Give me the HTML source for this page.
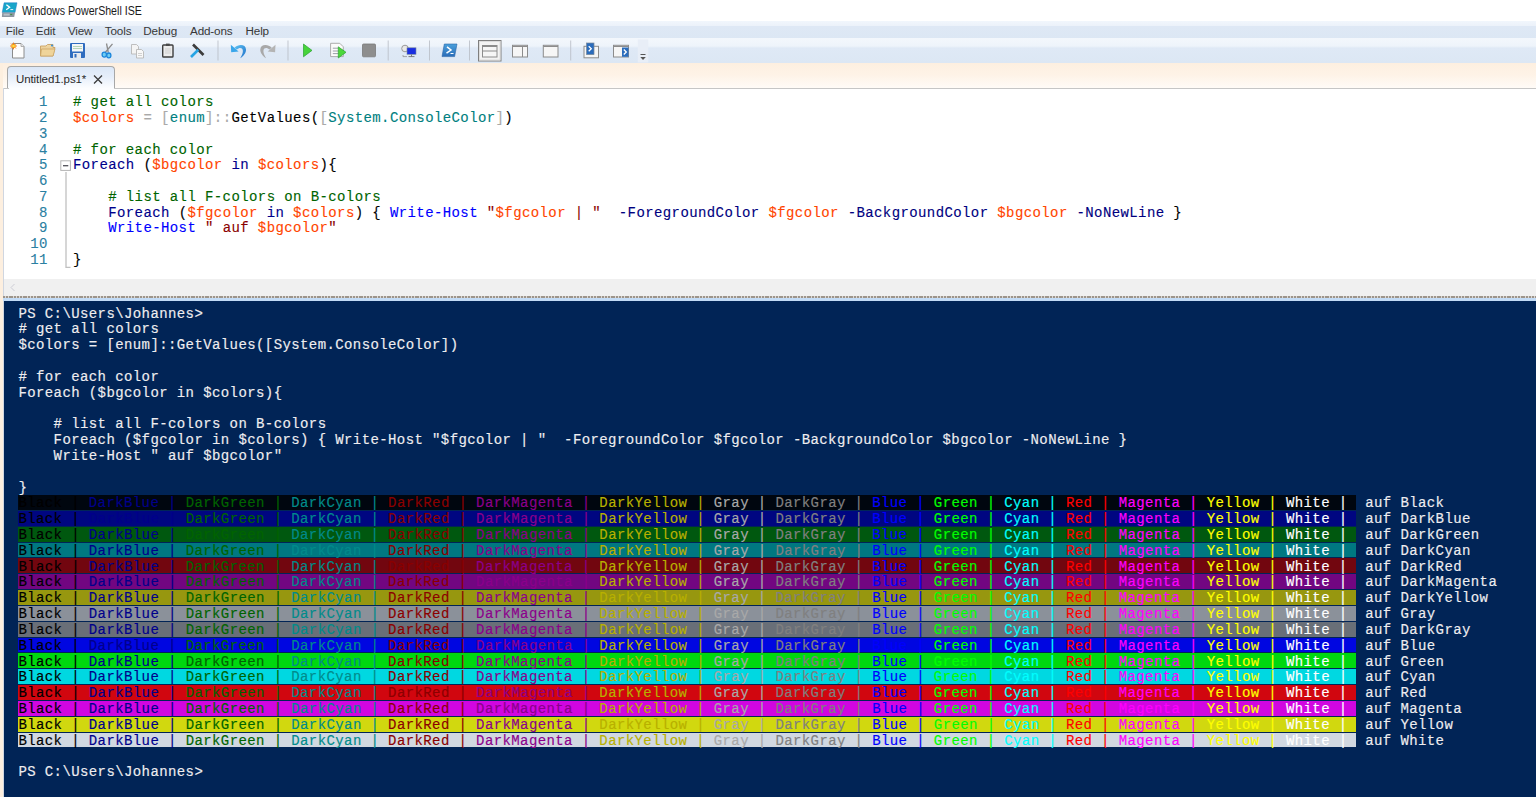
<!DOCTYPE html><html><head><meta charset="utf-8"><style>
*{margin:0;padding:0;box-sizing:border-box}
html,body{width:1536px;height:797px;overflow:hidden;background:#fff;position:relative;font-family:"Liberation Sans",sans-serif}
.a{position:absolute}
.ui{font-size:11.5px;color:#1e1e1e;white-space:pre}
.mono{font-family:"Liberation Mono",monospace;font-size:14px;letter-spacing:0.4px;white-space:pre}
.ln{line-height:15.77px;-webkit-text-stroke:0.12px currentColor}
.cl{font-size:14px!important;letter-spacing:0.4px!important;line-height:15.82px;color:#eeedf0;-webkit-text-stroke:0.15px currentColor}
</style></head><body>

<div class="a" style="left:0;top:0;width:1536px;height:21px;background:#fff"></div>
<svg class="a" style="left:0;top:0" width="20" height="20" viewBox="0 0 20 20">
<path d="M4.1 2.8 L17 2.8 L15 12.6 L2.2 12.6 Z" fill="#19a6c9" stroke="#1f78c8" stroke-width="0.5"/>
<path d="M2.2 12.6 L15 12.6 L14.2 16.9 L1.9 16.9 Z" fill="#8d97a2"/>
<rect x="3.6" y="13.6" width="6" height="2" fill="#b8c0c8"/>
<rect x="10.2" y="13.9" width="2" height="1.2" fill="#4c8a4c"/>
<path d="M6.4 4.8 L9.6 7.3 L6.2 9.7" stroke="#fff" stroke-width="1.3" fill="none"/>
<path d="M10.4 9.6 L13.2 9.6" stroke="#fff" stroke-width="0.9"/>
</svg>
<div class="a ui" style="left:21.5px;top:3.6px;font-size:12px;letter-spacing:0;transform:scaleX(0.885);transform-origin:0 0;color:#1a1a1a">Windows PowerShell ISE</div>
<div class="a" style="left:0;top:21px;width:1536px;height:17px;background:linear-gradient(#f1f6fc 0,#ecf2fa 4.5px,#dee8f5 5.5px,#dce7f4 17px)"></div>
<div class="a ui" style="left:5.8px;top:23.6px;font-size:11.7px;letter-spacing:-0.15px;color:#383838">File</div>
<div class="a ui" style="left:35.8px;top:23.6px;font-size:11.7px;letter-spacing:-0.15px;color:#383838">Edit</div>
<div class="a ui" style="left:67.9px;top:23.6px;font-size:11.7px;letter-spacing:-0.15px;color:#383838">View</div>
<div class="a ui" style="left:104.8px;top:23.6px;font-size:11.7px;letter-spacing:-0.15px;color:#383838">Tools</div>
<div class="a ui" style="left:143.3px;top:23.6px;font-size:11.7px;letter-spacing:-0.15px;color:#383838">Debug</div>
<div class="a ui" style="left:190px;top:23.6px;font-size:11.7px;letter-spacing:-0.15px;color:#383838">Add-ons</div>
<div class="a ui" style="left:245.5px;top:23.6px;font-size:11.7px;letter-spacing:-0.15px;color:#383838">Help</div>
<div class="a" style="left:0;top:38px;width:1536px;height:25px;background:linear-gradient(#f3f7fc 0,#eef4fb 8px,#dfe9f6 10px,#dce7f4 25px)"></div>
<svg class="a" style="left:0;top:38px" width="660" height="26" viewBox="0 0 660 26">
<defs>
<linearGradient id="gfold" x1="0" y1="0" x2="0" y2="1"><stop offset="0" stop-color="#f0d9a8"/><stop offset="1" stop-color="#e2bf80"/></linearGradient>
<linearGradient id="gps" x1="0" y1="0" x2="0" y2="1"><stop offset="0" stop-color="#4aa0dc"/><stop offset="1" stop-color="#2a6cb8"/></linearGradient>
</defs>
<!-- new -->
<path d="M12.5 5.5 H21 L24 8.5 V20 H12.5 Z" fill="#fdfdfd" stroke="#8c8c8c" stroke-width="1"/>
<path d="M21 5.5 V8.5 H24" fill="#e8e8e8" stroke="#a0a0a0" stroke-width="0.8"/>
<circle cx="13.5" cy="8" r="2.2" fill="#ffd21e"/>
<path d="M13.5 4.6 V11.4 M10.1 8 H16.9 M11.1 5.6 L15.9 10.4 M15.9 5.6 L11.1 10.4" stroke="#f57a1a" stroke-width="1"/>
<circle cx="13.5" cy="8" r="1.3" fill="#ffe040"/>
<!-- open -->
<path d="M40.5 8 H46 L47.5 6.5 H53 V9.5 H55 L53 18 H40.5 Z" fill="url(#gfold)" stroke="#c9a262" stroke-width="0.9"/>
<path d="M41.5 11 H55 L53 18 H40.5 Z" fill="#efd49a" stroke="#c9a262" stroke-width="0.7"/>
<circle cx="52" cy="7.5" r="1" fill="#2a8ee0"/>
<!-- save -->
<rect x="70" y="5" width="15" height="15" rx="1" fill="#2f6cbf"/>
<rect x="72" y="6" width="11" height="7.5" fill="#f4f6f8"/>
<path d="M73 8.5 H82 M73 10.5 H82" stroke="#9cc89c" stroke-width="0.7"/>
<rect x="73" y="15" width="8" height="5" fill="#e6e9ee"/>
<rect x="74.5" y="16" width="2" height="3.5" fill="#2f6cbf"/>
<!-- cut -->
<path d="M106.5 43.5 L108.3 52.5 M112.5 43.8 L105.2 52.5" transform="translate(0,-38)" stroke="#8c8c8c" stroke-width="1.3"/>
<ellipse cx="104.3" cy="16.6" rx="2.2" ry="2.5" fill="#6fcdf2" stroke="#1c86dc" stroke-width="1.3"/>
<ellipse cx="108.8" cy="17.4" rx="2.1" ry="2.4" fill="#6fcdf2" stroke="#1c86dc" stroke-width="1.3"/>
<!-- copy -->
<path d="M131.5 6.5 H136.5 L138.5 8.5 V16 H131.5 Z" fill="#f4f4f4" stroke="#b8b8b8" stroke-width="0.9"/>
<path d="M136.5 11.5 H141.5 L143.5 13.5 V20 H136.5 Z" fill="#f8f8f8" stroke="#b8b8b8" stroke-width="0.9"/>
<path d="M138 15.5 H142 M138 17.5 H142" stroke="#c0c0c0" stroke-width="0.7"/>
<!-- paste -->
<rect x="162.7" y="7" width="10.3" height="12" rx="0.8" fill="#ececec" stroke="#3e3e3e" stroke-width="1.4"/>
<rect x="166" y="5.6" width="3.7" height="2.4" fill="#4a4a4a"/>
<path d="M165 11 H171 M165 13 H171 M165 15 H171" stroke="#c4c4c4" stroke-width="0.7"/>
<!-- clear -->
<path d="M193 6.5 L203.5 17" stroke="#3c3c3c" stroke-width="2.6"/>
<path d="M198.3 11.8 L191 19" stroke="#26a4e4" stroke-width="2.6"/>
<!-- sep -->
<path d="M218 2.5 V22.5 M288 2.5 V22.5 M388.2 2.5 V22.5 M429.5 2.5 V22.5 M469.5 2.5 V22.5 M570.7 2.5 V22.5" stroke="#b9bec6" stroke-width="0.85"/>
<!-- undo -->
<defs><linearGradient id="gun" x1="0" y1="0" x2="1" y2="1"><stop offset="0" stop-color="#5ec4f4"/><stop offset="1" stop-color="#1f6fc8"/></linearGradient></defs>
<path d="M234.5 9.8 C238.5 5.6 245.8 6 246 11.5 C246.2 15 243.5 18 240.2 20.3 C242 17 243.2 14.6 242.8 12.2 C242.3 9.3 239 9.4 236.8 11.6 Z" fill="url(#gun)"/>
<path d="M230.8 6.8 L231.2 14.2 L238.6 13.6 Z" fill="#3aa6ea"/>
<!-- redo -->
<path d="M271.8 9.8 C267.8 5.6 260.5 6 260.3 11.5 C260.1 15 262.8 18 266.1 20.3 C264.3 17 263.1 14.6 263.5 12.2 C264 9.3 267.3 9.4 269.5 11.6 Z" fill="#a9a9a9"/>
<path d="M275.5 6.8 L275.1 14.2 L267.7 13.6 Z" fill="#b4b4b4"/>
<!-- run -->
<path d="M303.5 6 L312 12.4 L303.5 18.8 Z" fill="#46d43a" stroke="#2aa030" stroke-width="0.7"/>
<!-- run selection -->
<path d="M330.6 5.3 H339.8 L343.3 8.8 V18.6 H330.6 Z" fill="#fbfbfb" stroke="#a4a4a4" stroke-width="0.9"/>
<path d="M332.8 10.2 H338.5 M332.8 13 H338.5 M332.8 15.6 H338.5" stroke="#9aa0a8" stroke-width="1"/>
<path d="M338.3 8.8 L346 14.3 L338.3 20 Z" fill="#4cd83a" stroke="#2aa030" stroke-width="0.7"/>
<!-- stop -->
<rect x="362.5" y="6" width="13" height="12.8" rx="1" fill="#8e8e8e" stroke="#7a7a7a" stroke-width="0.8"/>
<!-- remote -->
<circle cx="405" cy="10.5" r="3.3" fill="#e8e8e8" stroke="#9a9a9a" stroke-width="1"/>
<rect x="407" y="9.8" width="9" height="6.5" fill="#1a2ee0" stroke="#7a8a9a" stroke-width="0.6"/>
<path d="M411.5 16.5 V18.5 M408.5 18.6 H414.5" stroke="#707070" stroke-width="0.9"/>
<path d="M403 17 V18.6 H407" stroke="#909090" stroke-width="0.8" fill="none"/>
<!-- ps -->
<path d="M444.3 6 H457 L454.6 18.6 H442 Z" fill="url(#gps)" stroke="#2a64a8" stroke-width="0.6"/>
<path d="M447 8.8 L451 12 L446.5 15.2" fill="none" stroke="#fff" stroke-width="1.5"/>
<path d="M450.5 15.5 H453.5" stroke="#fff" stroke-width="1"/>
<!-- layout1 selected -->
<rect x="478.5" y="2.5" width="22.5" height="20.5" fill="#f3f3f3" stroke="#7e7e7e" stroke-width="1"/>
<rect x="479.5" y="3.5" width="20.5" height="18.5" fill="none" stroke="#d8d8d8" stroke-width="0.8"/>
<rect x="482.5" y="7.5" width="14.5" height="11.5" fill="#f6f6f6" stroke="#8c8c8c" stroke-width="1"/>
<path d="M482.5 8.5 H497 M482.5 13 H497" stroke="#8c8c8c" stroke-width="1"/>
<!-- layout2 -->
<rect x="512.5" y="7.3" width="15" height="11.7" fill="#f6f6f6" stroke="#8c8c8c" stroke-width="1"/>
<path d="M512.5 8.5 H527.5 M522.5 8.5 V19" stroke="#8c8c8c" stroke-width="1"/>
<!-- layout3 -->
<rect x="543.3" y="7.3" width="14.7" height="11.7" fill="#f6f6f6" stroke="#8c8c8c" stroke-width="1"/>
<path d="M543.3 8.5 H558" stroke="#8c8c8c" stroke-width="1"/>
<!-- show script pane top -->
<rect x="584" y="8.3" width="14.5" height="11.5" fill="#f6f6f6" stroke="#8c8c8c" stroke-width="1"/>
<rect x="586.5" y="5" width="7.5" height="11.6" fill="#2a6cbc" stroke="#7a8898" stroke-width="0.7"/>
<path d="M588.7 8.3 L591.3 10.8 L588.7 13.3" fill="none" stroke="#fff" stroke-width="1.3"/>
<!-- show script pane right -->
<rect x="613.5" y="7.3" width="15" height="11.7" fill="#f6f6f6" stroke="#8c8c8c" stroke-width="1"/>
<path d="M613.5 8.5 H628.5" stroke="#8c8c8c" stroke-width="1"/>
<rect x="622" y="9.5" width="6.5" height="9.3" fill="#2a6cbc"/>
<path d="M623.8 11.5 L626.3 14 L623.8 16.5" fill="none" stroke="#fff" stroke-width="1.3"/>
<!-- overflow -->
<rect x="637.8" y="1.5" width="10.5" height="23" fill="#e8eef7"/>
<path d="M640.5 16.5 H645.5" stroke="#555" stroke-width="1"/>
<path d="M640.3 19 H645.8 L643 22 Z" fill="#555"/>
</svg>

<div class="a" style="left:0;top:63.4px;width:1536px;height:24.6px;background:linear-gradient(#fdefe0 0,#fef3e7 12px,#fffbf7 25px)"></div>
<div class="a" style="left:7px;top:66.3px;width:107.5px;height:22.7px;border:1px solid #a7a7a7;border-bottom:none;border-radius:4px 4px 0 0;background:linear-gradient(#dbe7f7,#e6eefa 10px,#fdfeff 22px)"></div>
<div class="a ui" style="left:16px;top:72.5px;letter-spacing:-0.1px;color:#2a2a2a">Untitled1.ps1*</div>
<svg class="a" style="left:93px;top:75px" width="10" height="9" viewBox="0 0 10 9"><path d="M1 0.5 L9 8.5 M9 0.5 L1 8.5" stroke="#3a3a3a" stroke-width="1.25"/></svg>
<div class="a" style="left:0;top:63px;width:3.2px;height:734px;background:#fdefdf"></div>
<div class="a" style="left:3px;top:88px;width:1533px;height:191px;background:#fff;border-top:1px solid #c6c6c6;border-left:1px solid #d4d8e0"></div>
<div class="a" style="left:8.5px;top:88px;width:105px;height:1.5px;background:#fcfdff"></div>
<div class="a mono ln" style="left:39.0px;top:95.2px;color:#2a80a2">1</div>
<div class="a mono ln" style="left:39.0px;top:110.97px;color:#2a80a2">2</div>
<div class="a mono ln" style="left:39.0px;top:126.74000000000001px;color:#2a80a2">3</div>
<div class="a mono ln" style="left:39.0px;top:142.51px;color:#2a80a2">4</div>
<div class="a mono ln" style="left:39.0px;top:158.28px;color:#2a80a2">5</div>
<div class="a mono ln" style="left:39.0px;top:174.05px;color:#2a80a2">6</div>
<div class="a mono ln" style="left:39.0px;top:189.82px;color:#2a80a2">7</div>
<div class="a mono ln" style="left:39.0px;top:205.59px;color:#2a80a2">8</div>
<div class="a mono ln" style="left:39.0px;top:221.36px;color:#2a80a2">9</div>
<div class="a mono ln" style="left:30.199999999999996px;top:237.13px;color:#2a80a2">10</div>
<div class="a mono ln" style="left:30.199999999999996px;top:252.89999999999998px;color:#2a80a2">11</div>
<div class="a mono ln" style="left:73px;top:95.2px"><span style="color:#006400"># get all colors</span></div>
<div class="a mono ln" style="left:73px;top:110.97px"><span style="color:#ff4500">$colors</span><span style="color:#a9a9a9"> = </span><span style="color:#a9a9a9">[</span><span style="color:#008080">enum</span><span style="color:#a9a9a9">]::</span><span style="color:#000000">GetValues</span><span style="color:#000000">(</span><span style="color:#a9a9a9">[</span><span style="color:#008080">System.ConsoleColor</span><span style="color:#a9a9a9">]</span><span style="color:#000000">)</span></div>
<div class="a mono ln" style="left:73px;top:142.51px"><span style="color:#006400"># for each color</span></div>
<div class="a mono ln" style="left:73px;top:158.28px"><span style="color:#00008b">Foreach</span><span style="color:#000000"> (</span><span style="color:#ff4500">$bgcolor</span><span style="color:#00008b"> in </span><span style="color:#ff4500">$colors</span><span style="color:#000000">){</span></div>
<div class="a mono ln" style="left:73px;top:189.82px"><span style="color:#006400">    # list all F-colors on B-colors</span></div>
<div class="a mono ln" style="left:73px;top:205.59px"><span style="color:#00008b">    Foreach</span><span style="color:#000000"> (</span><span style="color:#ff4500">$fgcolor</span><span style="color:#00008b"> in </span><span style="color:#ff4500">$colors</span><span style="color:#000000">) { </span><span style="color:#0000ff">Write-Host</span><span style="color:#8b0000"> &quot;</span><span style="color:#ff4500">$fgcolor</span><span style="color:#8b0000"> | &quot;</span><span style="color:#000080">  -ForegroundColor </span><span style="color:#ff4500">$fgcolor</span><span style="color:#000080"> -BackgroundColor </span><span style="color:#ff4500">$bgcolor</span><span style="color:#000080"> -NoNewLine </span><span style="color:#000000">}</span></div>
<div class="a mono ln" style="left:73px;top:221.36px"><span style="color:#0000ff">    Write-Host</span><span style="color:#8b0000"> &quot; auf </span><span style="color:#ff4500">$bgcolor</span><span style="color:#8b0000">&quot;</span></div>
<div class="a mono ln" style="left:73px;top:252.89999999999998px"><span style="color:#000000">}</span></div>
<svg class="a" style="left:58px;top:156px" width="16" height="116"><rect x="2.8" y="4.8" width="9.6" height="9.6" fill="#fff" stroke="#b4b4b4" stroke-width="1"/><path d="M5 9.7 H10.3" stroke="#505058" stroke-width="1.3"/><path d="M8 16 V111.3 H12.5" stroke="#c0c0c0" stroke-width="1.3" fill="none"/></svg>
<div class="a" style="left:4px;top:279px;width:1532px;height:17px;background:#f0f0f0"></div>
<div class="a" style="left:3px;top:88px;width:1px;height:709px;background:#d0d6e0"></div>
<svg class="a" style="left:8.5px;top:282.5px" width="8" height="9"><path d="M5.5 1 L2 4.5 L5.5 8" stroke="#cdcdd5" stroke-width="1" fill="none"/></svg>
<div class="a" style="left:3px;top:296.2px;width:1533px;height:1.7px;background:repeating-linear-gradient(90deg,#9c948a 0,#9c948a 2px,#dcd8d4 2px,#dcd8d4 2.8px)"></div>
<div class="a" style="left:3px;top:297.9px;width:1533px;height:2.7px;background:#c2dbf6"></div>
<div class="a" style="left:4px;top:300.6px;width:1532px;height:497px;background:#012456"></div>
<div class="a mono cl" style="left:18.400000000000002px;top:306.5px">PS C:\Users\Johannes&gt;</div>
<div class="a mono cl" style="left:18.400000000000002px;top:322.32px"># get all colors</div>
<div class="a mono cl" style="left:18.400000000000002px;top:338.14px">$colors = [enum]::GetValues([System.ConsoleColor])</div>
<div class="a mono cl" style="left:18.400000000000002px;top:369.78px"># for each color</div>
<div class="a mono cl" style="left:18.400000000000002px;top:385.6px">Foreach ($bgcolor in $colors){</div>
<div class="a mono cl" style="left:18.400000000000002px;top:417.24px">    # list all F-colors on B-colors</div>
<div class="a mono cl" style="left:18.400000000000002px;top:433.06px">    Foreach ($fgcolor in $colors) { Write-Host &quot;$fgcolor | &quot;  -ForegroundColor $fgcolor -BackgroundColor $bgcolor -NoNewLine }</div>
<div class="a mono cl" style="left:18.400000000000002px;top:448.88px">    Write-Host &quot; auf $bgcolor&quot;</div>
<div class="a mono cl" style="left:18.400000000000002px;top:480.52px">}</div>
<div class="a" style="left:18.3px;top:495.10px;width:1337.6000000000001px;height:14.9px;background:#00060f"></div>
<div class="a mono cl" style="left:18.400000000000002px;top:496.34px"><span style="color:#000000">Black | </span><span style="color:#00008b">DarkBlue | </span><span style="color:#006400">DarkGreen | </span><span style="color:#008b8b">DarkCyan | </span><span style="color:#8b0000">DarkRed | </span><span style="color:#8b008b">DarkMagenta | </span><span style="color:#b8b000">DarkYellow | </span><span style="color:#a9a9a9">Gray | </span><span style="color:#808080">DarkGray | </span><span style="color:#0000ff">Blue | </span><span style="color:#00ff00">Green | </span><span style="color:#00ffff">Cyan | </span><span style="color:#ff0000">Red | </span><span style="color:#ff00ff">Magenta | </span><span style="color:#ffff00">Yellow | </span><span style="color:#ffffff">White | </span> <span style="color:#eeedf0">auf Black</span></div>
<div class="a" style="left:18.3px;top:510.93px;width:1337.6000000000001px;height:14.9px;background:#000681"></div>
<div class="a mono cl" style="left:18.400000000000002px;top:512.16px"><span style="color:#000000">Black | </span><span style="color:#00008b">DarkBlue | </span><span style="color:#006400">DarkGreen | </span><span style="color:#008b8b">DarkCyan | </span><span style="color:#8b0000">DarkRed | </span><span style="color:#8b008b">DarkMagenta | </span><span style="color:#b8b000">DarkYellow | </span><span style="color:#a9a9a9">Gray | </span><span style="color:#808080">DarkGray | </span><span style="color:#0000ff">Blue | </span><span style="color:#00ff00">Green | </span><span style="color:#00ffff">Cyan | </span><span style="color:#ff0000">Red | </span><span style="color:#ff00ff">Magenta | </span><span style="color:#ffff00">Yellow | </span><span style="color:#ffffff">White | </span> <span style="color:#eeedf0">auf DarkBlue</span></div>
<div class="a" style="left:18.3px;top:526.76px;width:1337.6000000000001px;height:14.9px;background:#00580f"></div>
<div class="a mono cl" style="left:18.400000000000002px;top:527.98px"><span style="color:#000000">Black | </span><span style="color:#00008b">DarkBlue | </span><span style="color:#006400">DarkGreen | </span><span style="color:#008b8b">DarkCyan | </span><span style="color:#8b0000">DarkRed | </span><span style="color:#8b008b">DarkMagenta | </span><span style="color:#b8b000">DarkYellow | </span><span style="color:#a9a9a9">Gray | </span><span style="color:#808080">DarkGray | </span><span style="color:#0000ff">Blue | </span><span style="color:#00ff00">Green | </span><span style="color:#00ffff">Cyan | </span><span style="color:#ff0000">Red | </span><span style="color:#ff00ff">Magenta | </span><span style="color:#ffff00">Yellow | </span><span style="color:#ffffff">White | </span> <span style="color:#eeedf0">auf DarkGreen</span></div>
<div class="a" style="left:18.3px;top:542.59px;width:1337.6000000000001px;height:14.9px;background:#007881"></div>
<div class="a mono cl" style="left:18.400000000000002px;top:543.80px"><span style="color:#000000">Black | </span><span style="color:#00008b">DarkBlue | </span><span style="color:#006400">DarkGreen | </span><span style="color:#008b8b">DarkCyan | </span><span style="color:#8b0000">DarkRed | </span><span style="color:#8b008b">DarkMagenta | </span><span style="color:#b8b000">DarkYellow | </span><span style="color:#a9a9a9">Gray | </span><span style="color:#808080">DarkGray | </span><span style="color:#0000ff">Blue | </span><span style="color:#00ff00">Green | </span><span style="color:#00ffff">Cyan | </span><span style="color:#ff0000">Red | </span><span style="color:#ff00ff">Magenta | </span><span style="color:#ffff00">Yellow | </span><span style="color:#ffffff">White | </span> <span style="color:#eeedf0">auf DarkCyan</span></div>
<div class="a" style="left:18.3px;top:558.42px;width:1337.6000000000001px;height:14.9px;background:#72060f"></div>
<div class="a mono cl" style="left:18.400000000000002px;top:559.62px"><span style="color:#000000">Black | </span><span style="color:#00008b">DarkBlue | </span><span style="color:#006400">DarkGreen | </span><span style="color:#008b8b">DarkCyan | </span><span style="color:#8b0000">DarkRed | </span><span style="color:#8b008b">DarkMagenta | </span><span style="color:#b8b000">DarkYellow | </span><span style="color:#a9a9a9">Gray | </span><span style="color:#808080">DarkGray | </span><span style="color:#0000ff">Blue | </span><span style="color:#00ff00">Green | </span><span style="color:#00ffff">Cyan | </span><span style="color:#ff0000">Red | </span><span style="color:#ff00ff">Magenta | </span><span style="color:#ffff00">Yellow | </span><span style="color:#ffffff">White | </span> <span style="color:#eeedf0">auf DarkRed</span></div>
<div class="a" style="left:18.3px;top:574.25px;width:1337.6000000000001px;height:14.9px;background:#720681"></div>
<div class="a mono cl" style="left:18.400000000000002px;top:575.44px"><span style="color:#000000">Black | </span><span style="color:#00008b">DarkBlue | </span><span style="color:#006400">DarkGreen | </span><span style="color:#008b8b">DarkCyan | </span><span style="color:#8b0000">DarkRed | </span><span style="color:#8b008b">DarkMagenta | </span><span style="color:#b8b000">DarkYellow | </span><span style="color:#a9a9a9">Gray | </span><span style="color:#808080">DarkGray | </span><span style="color:#0000ff">Blue | </span><span style="color:#00ff00">Green | </span><span style="color:#00ffff">Cyan | </span><span style="color:#ff0000">Red | </span><span style="color:#ff00ff">Magenta | </span><span style="color:#ffff00">Yellow | </span><span style="color:#ffffff">White | </span> <span style="color:#eeedf0">auf DarkMagenta</span></div>
<div class="a" style="left:18.3px;top:590.08px;width:1337.6000000000001px;height:14.9px;background:#97970f"></div>
<div class="a mono cl" style="left:18.400000000000002px;top:591.26px"><span style="color:#000000">Black | </span><span style="color:#00008b">DarkBlue | </span><span style="color:#006400">DarkGreen | </span><span style="color:#008b8b">DarkCyan | </span><span style="color:#8b0000">DarkRed | </span><span style="color:#8b008b">DarkMagenta | </span><span style="color:#b8b000">DarkYellow | </span><span style="color:#a9a9a9">Gray | </span><span style="color:#808080">DarkGray | </span><span style="color:#0000ff">Blue | </span><span style="color:#00ff00">Green | </span><span style="color:#00ffff">Cyan | </span><span style="color:#ff0000">Red | </span><span style="color:#ff00ff">Magenta | </span><span style="color:#ffff00">Yellow | </span><span style="color:#ffffff">White | </span> <span style="color:#eeedf0">auf DarkYellow</span></div>
<div class="a" style="left:18.3px;top:605.91px;width:1337.6000000000001px;height:14.9px;background:#8b919a"></div>
<div class="a mono cl" style="left:18.400000000000002px;top:607.08px"><span style="color:#000000">Black | </span><span style="color:#00008b">DarkBlue | </span><span style="color:#006400">DarkGreen | </span><span style="color:#008b8b">DarkCyan | </span><span style="color:#8b0000">DarkRed | </span><span style="color:#8b008b">DarkMagenta | </span><span style="color:#b8b000">DarkYellow | </span><span style="color:#a9a9a9">Gray | </span><span style="color:#808080">DarkGray | </span><span style="color:#0000ff">Blue | </span><span style="color:#00ff00">Green | </span><span style="color:#00ffff">Cyan | </span><span style="color:#ff0000">Red | </span><span style="color:#ff00ff">Magenta | </span><span style="color:#ffff00">Yellow | </span><span style="color:#ffffff">White | </span> <span style="color:#eeedf0">auf Gray</span></div>
<div class="a" style="left:18.3px;top:621.74px;width:1337.6000000000001px;height:14.9px;background:#696f78"></div>
<div class="a mono cl" style="left:18.400000000000002px;top:622.90px"><span style="color:#000000">Black | </span><span style="color:#00008b">DarkBlue | </span><span style="color:#006400">DarkGreen | </span><span style="color:#008b8b">DarkCyan | </span><span style="color:#8b0000">DarkRed | </span><span style="color:#8b008b">DarkMagenta | </span><span style="color:#b8b000">DarkYellow | </span><span style="color:#a9a9a9">Gray | </span><span style="color:#808080">DarkGray | </span><span style="color:#0000ff">Blue | </span><span style="color:#00ff00">Green | </span><span style="color:#00ffff">Cyan | </span><span style="color:#ff0000">Red | </span><span style="color:#ff00ff">Magenta | </span><span style="color:#ffff00">Yellow | </span><span style="color:#ffffff">White | </span> <span style="color:#eeedf0">auf DarkGray</span></div>
<div class="a" style="left:18.3px;top:637.57px;width:1337.6000000000001px;height:14.9px;background:#0006e1"></div>
<div class="a mono cl" style="left:18.400000000000002px;top:638.72px"><span style="color:#000000">Black | </span><span style="color:#00008b">DarkBlue | </span><span style="color:#006400">DarkGreen | </span><span style="color:#008b8b">DarkCyan | </span><span style="color:#8b0000">DarkRed | </span><span style="color:#8b008b">DarkMagenta | </span><span style="color:#b8b000">DarkYellow | </span><span style="color:#a9a9a9">Gray | </span><span style="color:#808080">DarkGray | </span><span style="color:#0000ff">Blue | </span><span style="color:#00ff00">Green | </span><span style="color:#00ffff">Cyan | </span><span style="color:#ff0000">Red | </span><span style="color:#ff00ff">Magenta | </span><span style="color:#ffff00">Yellow | </span><span style="color:#ffffff">White | </span> <span style="color:#eeedf0">auf Blue</span></div>
<div class="a" style="left:18.3px;top:653.40px;width:1337.6000000000001px;height:14.9px;background:#00d80f"></div>
<div class="a mono cl" style="left:18.400000000000002px;top:654.54px"><span style="color:#000000">Black | </span><span style="color:#00008b">DarkBlue | </span><span style="color:#006400">DarkGreen | </span><span style="color:#008b8b">DarkCyan | </span><span style="color:#8b0000">DarkRed | </span><span style="color:#8b008b">DarkMagenta | </span><span style="color:#b8b000">DarkYellow | </span><span style="color:#a9a9a9">Gray | </span><span style="color:#808080">DarkGray | </span><span style="color:#0000ff">Blue | </span><span style="color:#00ff00">Green | </span><span style="color:#00ffff">Cyan | </span><span style="color:#ff0000">Red | </span><span style="color:#ff00ff">Magenta | </span><span style="color:#ffff00">Yellow | </span><span style="color:#ffffff">White | </span> <span style="color:#eeedf0">auf Green</span></div>
<div class="a" style="left:18.3px;top:669.23px;width:1337.6000000000001px;height:14.9px;background:#00d8e1"></div>
<div class="a mono cl" style="left:18.400000000000002px;top:670.36px"><span style="color:#000000">Black | </span><span style="color:#00008b">DarkBlue | </span><span style="color:#006400">DarkGreen | </span><span style="color:#008b8b">DarkCyan | </span><span style="color:#8b0000">DarkRed | </span><span style="color:#8b008b">DarkMagenta | </span><span style="color:#b8b000">DarkYellow | </span><span style="color:#a9a9a9">Gray | </span><span style="color:#808080">DarkGray | </span><span style="color:#0000ff">Blue | </span><span style="color:#00ff00">Green | </span><span style="color:#00ffff">Cyan | </span><span style="color:#ff0000">Red | </span><span style="color:#ff00ff">Magenta | </span><span style="color:#ffff00">Yellow | </span><span style="color:#ffffff">White | </span> <span style="color:#eeedf0">auf Cyan</span></div>
<div class="a" style="left:18.3px;top:685.06px;width:1337.6000000000001px;height:14.9px;background:#d1060f"></div>
<div class="a mono cl" style="left:18.400000000000002px;top:686.18px"><span style="color:#000000">Black | </span><span style="color:#00008b">DarkBlue | </span><span style="color:#006400">DarkGreen | </span><span style="color:#008b8b">DarkCyan | </span><span style="color:#8b0000">DarkRed | </span><span style="color:#8b008b">DarkMagenta | </span><span style="color:#b8b000">DarkYellow | </span><span style="color:#a9a9a9">Gray | </span><span style="color:#808080">DarkGray | </span><span style="color:#0000ff">Blue | </span><span style="color:#00ff00">Green | </span><span style="color:#00ffff">Cyan | </span><span style="color:#ff0000">Red | </span><span style="color:#ff00ff">Magenta | </span><span style="color:#ffff00">Yellow | </span><span style="color:#ffffff">White | </span> <span style="color:#eeedf0">auf Red</span></div>
<div class="a" style="left:18.3px;top:700.89px;width:1337.6000000000001px;height:14.9px;background:#d106e1"></div>
<div class="a mono cl" style="left:18.400000000000002px;top:702.00px"><span style="color:#000000">Black | </span><span style="color:#00008b">DarkBlue | </span><span style="color:#006400">DarkGreen | </span><span style="color:#008b8b">DarkCyan | </span><span style="color:#8b0000">DarkRed | </span><span style="color:#8b008b">DarkMagenta | </span><span style="color:#b8b000">DarkYellow | </span><span style="color:#a9a9a9">Gray | </span><span style="color:#808080">DarkGray | </span><span style="color:#0000ff">Blue | </span><span style="color:#00ff00">Green | </span><span style="color:#00ffff">Cyan | </span><span style="color:#ff0000">Red | </span><span style="color:#ff00ff">Magenta | </span><span style="color:#ffff00">Yellow | </span><span style="color:#ffffff">White | </span> <span style="color:#eeedf0">auf Magenta</span></div>
<div class="a" style="left:18.3px;top:716.72px;width:1337.6000000000001px;height:14.9px;background:#d1d80f"></div>
<div class="a mono cl" style="left:18.400000000000002px;top:717.82px"><span style="color:#000000">Black | </span><span style="color:#00008b">DarkBlue | </span><span style="color:#006400">DarkGreen | </span><span style="color:#008b8b">DarkCyan | </span><span style="color:#8b0000">DarkRed | </span><span style="color:#8b008b">DarkMagenta | </span><span style="color:#b8b000">DarkYellow | </span><span style="color:#a9a9a9">Gray | </span><span style="color:#808080">DarkGray | </span><span style="color:#0000ff">Blue | </span><span style="color:#00ff00">Green | </span><span style="color:#00ffff">Cyan | </span><span style="color:#ff0000">Red | </span><span style="color:#ff00ff">Magenta | </span><span style="color:#ffff00">Yellow | </span><span style="color:#ffffff">White | </span> <span style="color:#eeedf0">auf Yellow</span></div>
<div class="a" style="left:18.3px;top:732.55px;width:1337.6000000000001px;height:14.9px;background:#d1d8e1"></div>
<div class="a mono cl" style="left:18.400000000000002px;top:733.64px"><span style="color:#000000">Black | </span><span style="color:#00008b">DarkBlue | </span><span style="color:#006400">DarkGreen | </span><span style="color:#008b8b">DarkCyan | </span><span style="color:#8b0000">DarkRed | </span><span style="color:#8b008b">DarkMagenta | </span><span style="color:#b8b000">DarkYellow | </span><span style="color:#a9a9a9">Gray | </span><span style="color:#808080">DarkGray | </span><span style="color:#0000ff">Blue | </span><span style="color:#00ff00">Green | </span><span style="color:#00ffff">Cyan | </span><span style="color:#ff0000">Red | </span><span style="color:#ff00ff">Magenta | </span><span style="color:#ffff00">Yellow | </span><span style="color:#ffffff">White | </span> <span style="color:#eeedf0">auf White</span></div>
<div class="a mono cl" style="left:18.400000000000002px;top:765.28px">PS C:\Users\Johannes&gt;</div>
</body></html>
